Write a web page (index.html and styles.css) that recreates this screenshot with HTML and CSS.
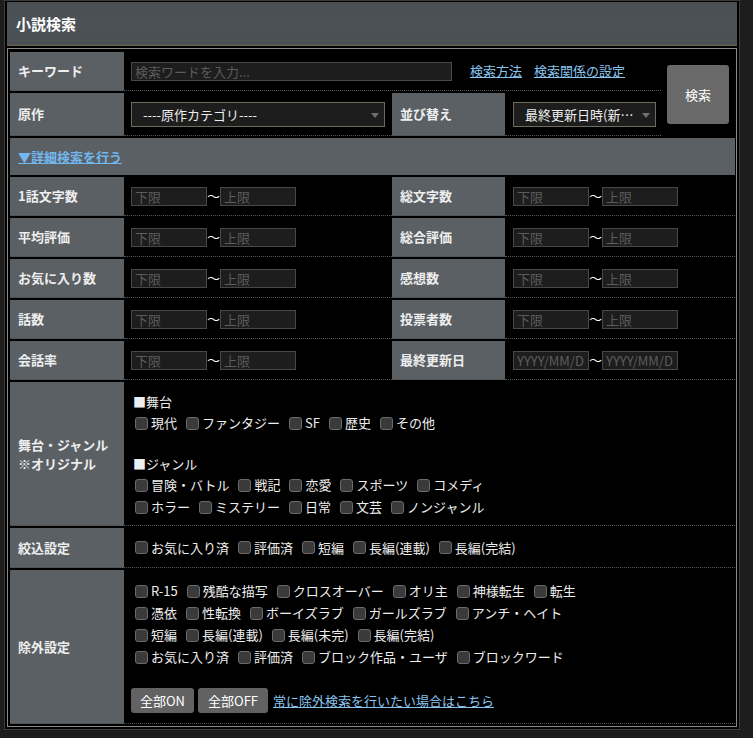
FILE: index.html
```html
<!DOCTYPE html>
<html lang="ja">
<head>
  <meta charset="UTF-8">
  <title>小説検索</title>
  <link rel="stylesheet" href="styles.css">
</head>
<body>
  <div class="search-box">
    <!-- Header -->
    <div class="search-head">
      <h1>小説検索</h1>
    </div>

    <!-- Form -->
    <form class="search-frame">
      <table class="search-table">
        <colgroup>
          <col style="width:114px">
          <col style="width:268px">
          <col style="width:113px">
          <col style="width:156px">
          <col style="width:74px">
        </colgroup>

        <tr class="row-std">
          <th class="label">キーワード</th>
          <td colspan="3">
            <div class="kw-line">
              <input class="text-input keyword" type="text" placeholder="検索ワードを入力...">
              <a class="link first" href="#">検索方法</a>
              <a class="link" href="#">検索関係の設定</a>
            </div>
          </td>
          <td class="submit-cell" rowspan="2">
            <button class="search-btn" type="button">検索</button>
          </td>
        </tr>

        <tr class="row-select">
          <th class="label">原作</th>
          <td>
            <span class="select-wrap">
              <select class="select original">
                <option>----原作カテゴリ----</option>
              </select>
            </span>
          </td>
          <th class="label">並び替え</th>
          <td class="sort-cell">
            <span class="select-wrap">
              <select class="select sort">
                <option>最終更新日時(新しい順)</option>
              </select>
            </span>
          </td>
        </tr>

        <tr>
          <td class="more" colspan="5"><a href="#">▼詳細検索を行う</a></td>
        </tr>

        <tr class="row-std">
          <th class="label">1話文字数</th>
          <td><div class="range"><input class="text-input range-input" placeholder="下限"><span class="tilde">〜</span><input class="text-input range-input" placeholder="上限"></div></td>
          <th class="label">総文字数</th>
          <td class="sort-cell" colspan="2"><div class="range"><input class="text-input range-input" placeholder="下限"><span class="tilde">〜</span><input class="text-input range-input" placeholder="上限"></div></td>
        </tr>
        <tr class="row-std">
          <th class="label">平均評価</th>
          <td><div class="range"><input class="text-input range-input" placeholder="下限"><span class="tilde">〜</span><input class="text-input range-input" placeholder="上限"></div></td>
          <th class="label">総合評価</th>
          <td class="sort-cell" colspan="2"><div class="range"><input class="text-input range-input" placeholder="下限"><span class="tilde">〜</span><input class="text-input range-input" placeholder="上限"></div></td>
        </tr>
        <tr class="row-std">
          <th class="label">お気に入り数</th>
          <td><div class="range"><input class="text-input range-input" placeholder="下限"><span class="tilde">〜</span><input class="text-input range-input" placeholder="上限"></div></td>
          <th class="label">感想数</th>
          <td class="sort-cell" colspan="2"><div class="range"><input class="text-input range-input" placeholder="下限"><span class="tilde">〜</span><input class="text-input range-input" placeholder="上限"></div></td>
        </tr>
        <tr class="row-std">
          <th class="label">話数</th>
          <td><div class="range"><input class="text-input range-input" placeholder="下限"><span class="tilde">〜</span><input class="text-input range-input" placeholder="上限"></div></td>
          <th class="label">投票者数</th>
          <td class="sort-cell" colspan="2"><div class="range"><input class="text-input range-input" placeholder="下限"><span class="tilde">〜</span><input class="text-input range-input" placeholder="上限"></div></td>
        </tr>
        <tr class="row-std">
          <th class="label">会話率</th>
          <td><div class="range"><input class="text-input range-input" placeholder="下限"><span class="tilde">〜</span><input class="text-input range-input" placeholder="上限"></div></td>
          <th class="label">最終更新日</th>
          <td class="sort-cell" colspan="2"><div class="range"><input class="text-input range-input" placeholder="YYYY/MM/DD"><span class="tilde">〜</span><input class="text-input range-input" placeholder="YYYY/MM/DD"></div></td>
        </tr>

        <!-- 舞台・ジャンル -->
        <tr>
          <th class="label two-line">舞台・ジャンル<br>※オリジナル</th>
          <td class="opts genre" colspan="4">
            <div class="opt-head">■舞台</div>
            <div class="opt-line">
              <label class="opt"><input type="checkbox">現代</label>
              <label class="opt"><input type="checkbox">ファンタジー</label>
              <label class="opt"><input type="checkbox">SF</label>
              <label class="opt"><input type="checkbox">歴史</label>
              <label class="opt"><input type="checkbox">その他</label>
            </div>
            <div class="opt-gap"></div>
            <div class="opt-head">■ジャンル</div>
            <div class="opt-line">
              <label class="opt"><input type="checkbox">冒険・バトル</label>
              <label class="opt"><input type="checkbox">戦記</label>
              <label class="opt"><input type="checkbox">恋愛</label>
              <label class="opt"><input type="checkbox">スポーツ</label>
              <label class="opt"><input type="checkbox">コメディ</label>
            </div>
            <div class="opt-line">
              <label class="opt"><input type="checkbox">ホラー</label>
              <label class="opt"><input type="checkbox">ミステリー</label>
              <label class="opt"><input type="checkbox">日常</label>
              <label class="opt"><input type="checkbox">文芸</label>
              <label class="opt"><input type="checkbox">ノンジャンル</label>
            </div>
          </td>
        </tr>

        <!-- 絞込設定 -->
        <tr class="row-filter">
          <th class="label">絞込設定</th>
          <td colspan="4">
            <div class="opt-line">
              <label class="opt"><input type="checkbox">お気に入り済</label>
              <label class="opt"><input type="checkbox">評価済</label>
              <label class="opt"><input type="checkbox">短編</label>
              <label class="opt"><input type="checkbox">長編(連載)</label>
              <label class="opt"><input type="checkbox">長編(完結)</label>
            </div>
          </td>
        </tr>

        <!-- 除外設定 -->
        <tr>
          <th class="label">除外設定</th>
          <td class="opts exclude" colspan="4">
            <div class="opt-line">
              <label class="opt"><input type="checkbox">R-15</label>
              <label class="opt"><input type="checkbox">残酷な描写</label>
              <label class="opt"><input type="checkbox">クロスオーバー</label>
              <label class="opt"><input type="checkbox">オリ主</label>
              <label class="opt"><input type="checkbox">神様転生</label>
              <label class="opt"><input type="checkbox">転生</label>
            </div>
            <div class="opt-line">
              <label class="opt"><input type="checkbox">憑依</label>
              <label class="opt"><input type="checkbox">性転換</label>
              <label class="opt"><input type="checkbox">ボーイズラブ</label>
              <label class="opt"><input type="checkbox">ガールズラブ</label>
              <label class="opt"><input type="checkbox">アンチ・ヘイト</label>
            </div>
            <div class="opt-line">
              <label class="opt"><input type="checkbox">短編</label>
              <label class="opt"><input type="checkbox">長編(連載)</label>
              <label class="opt"><input type="checkbox">長編(未完)</label>
              <label class="opt"><input type="checkbox">長編(完結)</label>
            </div>
            <div class="opt-line">
              <label class="opt"><input type="checkbox">お気に入り済</label>
              <label class="opt"><input type="checkbox">評価済</label>
              <label class="opt"><input type="checkbox">ブロック作品・ユーザ</label>
              <label class="opt"><input type="checkbox">ブロックワード</label>
            </div>
            <div class="opt-gap"></div>
            <div class="btn-line">
              <button class="small-btn on" type="button">全部ON</button>
              <button class="small-btn off" type="button">全部OFF</button>
              <a class="link" href="#">常に除外検索を行いたい場合はこちら</a>
            </div>
          </td>
        </tr>
      </table>
    </form>
  </div>
</body>
</html>
```

FILE: styles.css
```css
/* Global */
* {
  margin: 0;
  padding: 0;
  box-sizing: border-box;
}

body {
  background-color: #1c1d1c;
  font-family: "Noto Sans CJK JP", "Noto Sans", sans-serif;
  font-size: 13px;
  line-height: 20px;
  color: #eeeeee;
}

/* Outer box */
.search-box {
  width: 736px;
  margin-left: 4px;
  background: #000000;
  border: 1px solid #3c3c3c;
  padding: 1px 2px 2px;
}

/* Header */
.search-head {
  height: 44px;
  background-color: #4b5055;
  background-image: radial-gradient(circle, #555a5f 0.7px, transparent 1.2px);
  background-size: 8px 11px;
  border-bottom: 1px solid #6d6752;
  padding-left: 9px;
  margin-bottom: 2px;
  display: flex;
  align-items: center;
}

.search-head h1 {
  font-size: 15px;
  font-weight: bold;
  color: #ffffff;
}

/* Form frame */
.search-frame {
  border: 1px solid #8a8a82;
  padding: 1px 1px 0 2px;
}

.search-table {
  width: 725px;
  table-layout: fixed;
  border-collapse: separate;
  border-spacing: 0 2px;
}

.search-table th,
.search-table td {
  vertical-align: middle;
  border-bottom: 1px dotted #555555;
}

.search-table td {
  padding: 0 7px;
}

.label {
  background: #5b6064;
  color: #eeeeee;
  font-weight: bold;
  text-align: left;
  padding-left: 8px;
  border-bottom-color: #46494c !important;
}

.two-line {
  line-height: 19px;
}

.row-std th,
.row-std td {
  height: 39px;
}

.row-select th,
.row-select td {
  height: 43px;
}

.row-filter th,
.row-filter td {
  height: 40px;
}

.sort-cell {
  padding-left: 8px !important;
}

/* Inputs */
.text-input {
  height: 19px;
  background: #1c1d1c;
  border: 1px solid #484848;
  color: #dddddd;
  font-family: inherit;
  font-size: 13px;
  padding: 0 3px;
  outline: none;
}

.text-input::placeholder {
  color: #5c5c5c;
}

.keyword {
  width: 321px;
}

.kw-line {
  display: flex;
  align-items: center;
}

.range {
  display: flex;
  align-items: center;
}

.range-input {
  width: 76px;
}

.tilde {
  width: 13px;
  text-align: center;
  color: #ffffff;
}

/* Links */
.link {
  color: #88c4ee;
  text-decoration: underline;
}

.kw-line .link {
  margin-left: 12px;
}

.kw-line .link.first {
  margin-left: 18px;
}

/* Select boxes */
.select-wrap {
  position: relative;
  display: inline-block;
  vertical-align: middle;
}

.select-wrap::after {
  content: "";
  position: absolute;
  right: 6px;
  top: 11px;
  border-left: 4px solid transparent;
  border-right: 4px solid transparent;
  border-top: 5px solid #6f6f6f;
  pointer-events: none;
}

.select {
  appearance: none;
  -webkit-appearance: none;
  height: 25px;
  background: #1c1d1c;
  border: 1px solid #6e6a5e;
  color: #eeeeee;
  font-family: inherit;
  font-size: 13px;
  padding: 0 16px 0 11px;
  text-overflow: ellipsis;
  outline: none;
}

.select.original {
  width: 254px;
}

.select.sort {
  width: 143px;
}

/* Search button */
.submit-cell {
  border-bottom: none !important;
  text-align: center;
  padding: 0 !important;
}

.search-btn {
  width: 62px;
  height: 59px;
  background: #696969;
  border: none;
  border-radius: 3px;
  color: #ffffff;
  font-family: inherit;
  font-size: 13px;
}

/* Detail toggle bar */
.more {
  height: 37px;
  background: #5b6064;
  padding-left: 8px !important;
  border-bottom: none !important;
}

.more a {
  color: #72b7ee;
  font-weight: bold;
  text-decoration: underline;
}

/* Checkbox groups */
.opts.genre {
  padding: 10px 7px 7px 9px;
}

.opts.exclude {
  padding: 10px 7px 10px;
}

.opts.genre .opt-line {
  margin-left: -2px;
}

.opt-head {
  height: 20px;
}

.opt-gap {
  height: 20px;
}

.opt-line {
  display: flex;
  align-items: center;
  height: 22px;
}

.opt {
  display: inline-flex;
  align-items: center;
  margin-right: 5px;
  white-space: nowrap;
}

.opt input {
  appearance: none;
  -webkit-appearance: none;
  width: 13px;
  height: 13px;
  margin: 0 3px 0 4px;
  border: 1px solid #6a6a6a;
  border-radius: 3px;
  background: #3a3a3a;
  flex: none;
}

/* Bottom buttons */
.btn-line {
  display: flex;
  align-items: center;
  gap: 4px;
}

.small-btn {
  height: 25px;
  background: #626262;
  border: none;
  border-radius: 3px;
  color: #ffffff;
  font-family: inherit;
  font-size: 13px;
}

.small-btn.on {
  width: 63px;
}

.small-btn.off {
  width: 70px;
}

.btn-line .link {
  margin-left: 1px;
}
```
